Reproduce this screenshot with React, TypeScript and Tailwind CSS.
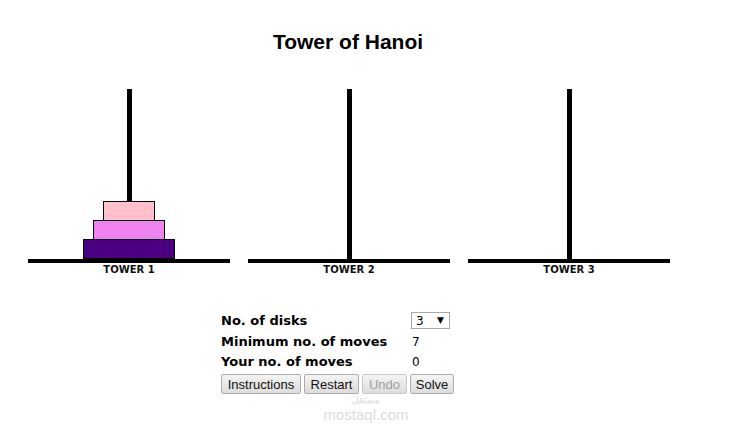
import React from "react";

const disks = [
  { w: "w-[52px]", c: "bg-[#ffc0cb]" },
  { w: "w-[72px]", c: "bg-[#ee82ee]" },
  { w: "w-[92px]", c: "bg-[#4b0082]" },
];

function Tower({ label, withDisks }: { label: string; withDisks?: boolean }) {
  return (
    <div className="flex w-[202px] flex-col items-center">
      <div className="flex h-[170px] w-full flex-col items-center">
        <div className="w-[5px] flex-1 bg-black" />
        {withDisks &&
          disks.map((d, i) => (
            <div
              key={i}
              className={`${d.w} ${d.c} h-[20px] border border-black ${i > 0 ? "-mt-px" : ""}`}
            />
          ))}
      </div>
      <div className="h-[4px] w-full bg-black" />
      <div className="mt-px text-[10px] font-bold leading-[12px] text-[#111] [font-family:'DejaVu_Sans',sans-serif]">
        {label}
      </div>
    </div>
  );
}

function Btn({ children, w, disabled }: { children: React.ReactNode; w: string; disabled?: boolean }) {
  return (
    <div
      className={`${w} flex h-[20px] items-center justify-center rounded-[2px] border bg-gradient-to-b from-[#f4f4f4] to-[#dcdcdc] text-[13px] leading-none [font-family:'Liberation_Sans',sans-serif] ${
        disabled ? "border-[#c8c8c8] text-[#a0a0a0]" : "border-[#adadad] text-[#111]"
      }`}
    >
      {children}
    </div>
  );
}

export default function App() {
  return (
    <div className="min-h-[429px] w-full bg-white text-black">
      <div className="flex w-[696px] justify-center pt-[30px] text-[21px] font-bold leading-[24px] [font-family:'Liberation_Sans',sans-serif]">
        Tower of Hanoi
      </div>
      <div className="mt-[35px] flex gap-[18px] pl-[28px]">
        <Tower label="TOWER 1" withDisks />
        <Tower label="TOWER 2" />
        <Tower label="TOWER 3" />
      </div>
      <div className="ml-[221px] mt-[34px] [font-family:'DejaVu_Sans',sans-serif]">
        <div className="grid grid-cols-[190px_auto] text-[13px] font-bold">
          <div className="flex h-[21px] items-center">No. of disks</div>
          <div className="flex h-[21px] items-center">
            <div className="flex h-[17px] w-[39px] items-center justify-between border border-[#a9a9a9] pl-[4px] pr-[5px] text-[12px] font-normal">
              <span>3</span>
              <span className="text-[9px]">▼</span>
            </div>
          </div>
          <div className="flex h-[21px] items-center">Minimum no. of moves</div>
          <div className="flex h-[21px] items-center pl-[1px] text-[12px] font-normal">7</div>
          <div className="flex h-[20px] items-center">Your no. of moves</div>
          <div className="flex h-[20px] items-center pl-[1px] text-[12px] font-normal">0</div>
        </div>
        <div className="mt-[2px] flex gap-[3px]">
          <Btn w="w-[80px]">Instructions</Btn>
          <Btn w="w-[55px]">Restart</Btn>
          <Btn w="w-[45px]" disabled>
            Undo
          </Btn>
          <Btn w="w-[44px]">Solve</Btn>
        </div>
      </div>
      <div className="ml-[322px] flex w-[88px] flex-col items-center">
        <div className="text-[9px] font-bold leading-[12px] text-[#e2e2e2] [font-family:'Noto_Sans',sans-serif]">مستقل</div>
        <div className="text-[15px] leading-[17px] text-[#dcdcdc] [font-family:'Liberation_Sans',sans-serif]">
          mostaql.com
        </div>
      </div>
    </div>
  );
}
